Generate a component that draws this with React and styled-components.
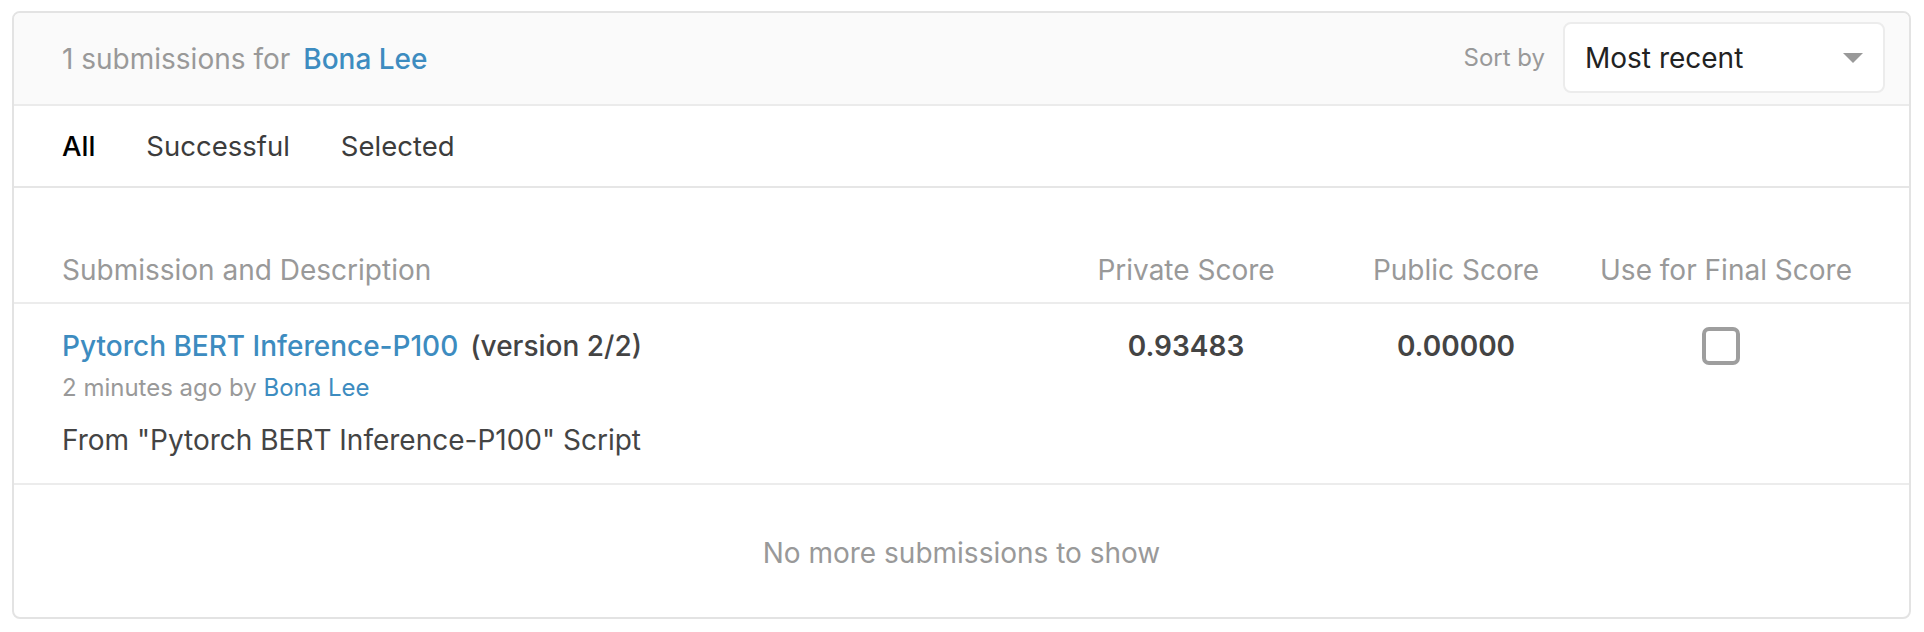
import React, { useState } from 'react';
import styled, { createGlobalStyle } from 'styled-components';

const GlobalStyle = createGlobalStyle`
  html, body {
    margin: 0;
    padding: 0;
    background: #fff;
    font-family: Inter, "Noto Sans", "Liberation Sans", sans-serif;
    -webkit-font-smoothing: antialiased;
  }
`;

const Card = styled.section`
  margin: 11px 13px 0 12px;
  border: 2px solid #e3e3e3;
  border-radius: 8px;
  background: #fff;
  overflow: hidden;
`;

const Header = styled.header`
  height: 91px;
  padding: 0 24px 0 48px;
  background: #fafafa;
  border-bottom: 2px solid #ebebeb;
  display: flex;
  align-items: center;
  justify-content: space-between;
`;

const Title = styled.h2`
  margin: 0;
  font-size: 28px;
  font-weight: 400;
  color: #999;
  line-height: 40px;

  a {
    color: #3d8cc0;
    font-weight: 500;
    text-decoration: none;
    margin-left: 13px;
  }
`;

const SortGroup = styled.div`
  display: flex;
  align-items: center;
  gap: 18px;
  margin-top: -2px;
`;

const SortLabel = styled.span`
  font-size: 24px;
  color: #999;
`;

const Select = styled.div`
  width: 322px;
  height: 71px;
  box-sizing: border-box;
  border: 2px solid #ececec;
  border-radius: 8px;
  background: #fff;
  padding: 0 20px;
  display: flex;
  align-items: center;
  justify-content: space-between;
  font-size: 28px;
  color: #222;
  cursor: pointer;
`;

const Caret = styled.span`
  width: 0;
  height: 0;
  border-left: 10px solid transparent;
  border-right: 10px solid transparent;
  border-top: 10px solid #999;
`;

const Tabs = styled.nav`
  height: 80px;
  padding: 0 48px;
  display: flex;
  align-items: center;
  gap: 51px;
  border-bottom: 2px solid #e6e6e6;
`;

const Tab = styled.button`
  background: none;
  border: none;
  padding: 0;
  font-family: inherit;
  font-size: 27.5px;
  line-height: 40px;
  color: ${(p) => (p.$active ? '#000' : '#3c3c3c')};
  font-weight: ${(p) => (p.$active ? 500 : 400)};
  cursor: pointer;
`;

const Grid = styled.div`
  display: grid;
  grid-template-columns: 1fr 270px 270px 270px;
  padding: ${(p) => p.$pad};
  border-bottom: 2px solid #ececec;
  align-items: ${(p) => p.$align || 'start'};
`;

const HeadCell = styled.div`
  font-size: 28px;
  line-height: 40px;
  color: #999;
  text-align: ${(p) => (p.$center ? 'center' : 'left')};
`;

const SubTitle = styled.div`
  font-size: 28px;
  line-height: 40px;
  font-weight: 500;
  color: #444;

  a {
    color: #3d8cc0;
    text-decoration: none;
    margin-right: 12px;
  }
`;

const Meta = styled.div`
  margin-top: 4px;
  font-size: 24px;
  line-height: 36px;
  color: #999;

  a {
    color: #3d8cc0;
    text-decoration: none;
  }
`;

const Description = styled.p`
  margin: 14px 0 0;
  font-size: 28px;
  line-height: 40px;
  color: #444;
`;

const Score = styled.div`
  font-size: 28px;
  line-height: 40px;
  font-weight: 600;
  color: #444;
  text-align: center;
`;

const CheckCell = styled.div`
  display: flex;
  justify-content: center;
  padding-top: 1px;
  padding-right: 10px;
`;

const Checkbox = styled.span`
  width: 38px;
  height: 38px;
  box-sizing: border-box;
  border: 4px solid ${(p) => (p.$checked ? '#3d8cc0' : '#9e9e9e')};
  background: ${(p) => (p.$checked ? '#3d8cc0' : '#fff')};
  border-radius: 7px;
  cursor: pointer;
`;

const Footer = styled.div`
  padding: 48px 48px 44px;
  text-align: center;
  font-size: 28px;
  line-height: 40px;
  color: #999;
`;

const tabs = ['All', 'Successful', 'Selected'];

export default function App() {
  const [active, setActive] = useState('All');
  const [selected, setSelected] = useState(false);

  return (
    <>
      <GlobalStyle />
      <Card>
        <Header>
          <Title>
            1 submissions for<a href="#">Bona Lee</a>
          </Title>
          <SortGroup>
            <SortLabel>Sort by</SortLabel>
            <Select>
              <span>Most recent</span>
              <Caret />
            </Select>
          </SortGroup>
        </Header>

        <Tabs>
          {tabs.map((t) => (
            <Tab key={t} $active={active === t} onClick={() => setActive(t)}>
              {t}
            </Tab>
          ))}
        </Tabs>

        <Grid $pad="62px 48px 12px" $align="end">
          <HeadCell>Submission and Description</HeadCell>
          <HeadCell $center>Private Score</HeadCell>
          <HeadCell $center>Public Score</HeadCell>
          <HeadCell $center>Use for Final Score</HeadCell>
        </Grid>

        <Grid $pad="22px 48px 23px">
          <div>
            <SubTitle>
              <a href="#">Pytorch BERT Inference-P100</a>(version 2/2)
            </SubTitle>
            <Meta>
              2 minutes ago by <a href="#">Bona Lee</a>
            </Meta>
            <Description>From "Pytorch BERT Inference-P100" Script</Description>
          </div>
          <Score>0.93483</Score>
          <Score>0.00000</Score>
          <CheckCell>
            <Checkbox $checked={selected} onClick={() => setSelected(!selected)} />
          </CheckCell>
        </Grid>

        <Footer>No more submissions to show</Footer>
      </Card>
    </>
  );
}
